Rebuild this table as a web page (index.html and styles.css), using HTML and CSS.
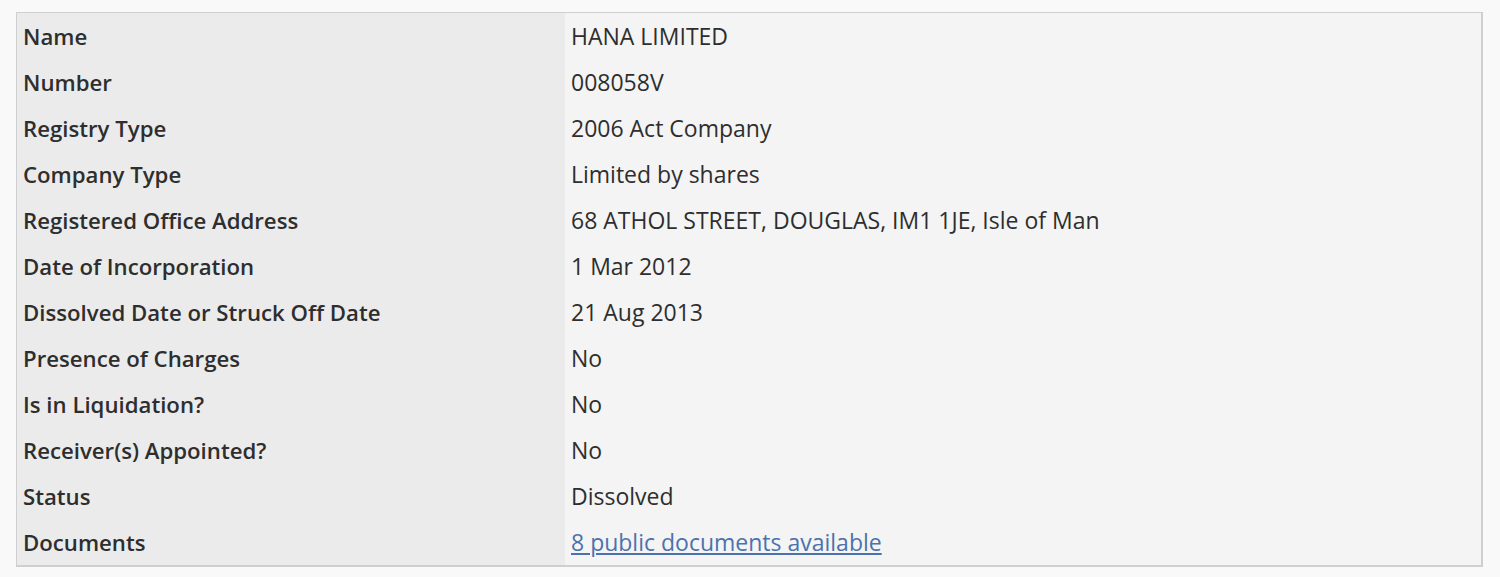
FILE: index.html
```html
<!DOCTYPE html>
<html lang="en">
<head>
  <meta charset="UTF-8" />
  <meta name="viewport" content="width=device-width, initial-scale=1.0"/>
  <title>HANA LIMITED</title>
  <link rel="stylesheet" href="styles.css">
</head>
<body>
  <table class="details">
    <tbody>
      <tr><th>Name</th><td>HANA LIMITED</td></tr>
      <tr><th>Number</th><td>008058V</td></tr>
      <tr><th>Registry Type</th><td>2006 Act Company</td></tr>
      <tr><th>Company Type</th><td>Limited by shares</td></tr>
      <tr><th>Registered Office Address</th><td>68 ATHOL STREET, DOUGLAS, IM1 1JE, Isle of Man</td></tr>
      <tr><th>Date of Incorporation</th><td>1 Mar 2012</td></tr>
      <tr><th>Dissolved Date or Struck Off Date</th><td>21 Aug 2013</td></tr>
      <tr><th>Presence of Charges</th><td>No</td></tr>
      <tr><th>Is in Liquidation?</th><td>No</td></tr>
      <tr><th>Receiver(s) Appointed?</th><td>No</td></tr>
      <tr><th>Status</th><td>Dissolved</td></tr>
      <tr><th>Documents</th><td><a href="#">8 public documents available</a></td></tr>
    </tbody>
  </table>
</body>
</html>
```

FILE: styles.css
```css
body {
  font-family: 'Open Sans', sans-serif;
  margin: 0;
  padding: 12px 17px 10px 16px;
  background: #f9f9f9;
  color: #2e2e2e;
}
.details {
  width: 100%;
  border-collapse: collapse;
  border: 1px solid #cfcfcf;
  border-width: 1px 2px 2px 1px;
  font-size: 23px;
}
.details th,
.details td {
  height: 44px;
  padding: 1px 6px;
  text-align: left;
  vertical-align: middle;
}
.details th {
  width: 536px;
  font-size: 22.2px;
  font-weight: 600;
  background: #ebebeb;
}
.details td {
  background: #f4f4f4;
  font-weight: 400;
}
.details a {
  color: #4b72ad;
}
```
